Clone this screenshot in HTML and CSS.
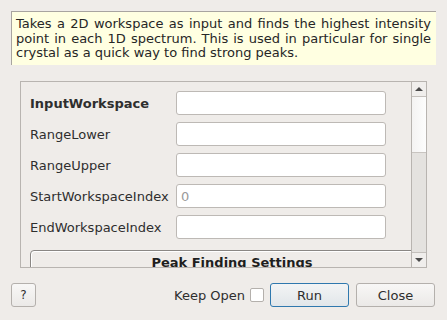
FILE: index.html
```html
<!DOCTYPE html>
<html lang="en">
<head>
    <meta charset="UTF-8">
    <meta name="viewport" content="width=device-width, initial-scale=1.0">
    <title>FindPeaks</title>
    <link rel="stylesheet" href="styles.css">
</head>
<body>
    <div class="description">
        Takes a 2D workspace as input and finds the highest intensity point in each 1D spectrum. This is used in particular for single crystal as a quick way to find strong peaks.
    </div>

    <div class="scroll-area">
        <div class="form-content">
            <div class="form-grid">
                <label class="mandatory" for="inputWorkspace">InputWorkspace</label>
                <input type="text" id="inputWorkspace">

                <label for="rangeLower">RangeLower</label>
                <input type="text" id="rangeLower">

                <label for="rangeUpper">RangeUpper</label>
                <input type="text" id="rangeUpper">

                <label for="startIndex">StartWorkspaceIndex</label>
                <input type="text" id="startIndex" placeholder="0">

                <label for="endIndex">EndWorkspaceIndex</label>
                <input type="text" id="endIndex">
            </div>
            <div class="group-box">
                <div class="group-title">Peak Finding Settings</div>
            </div>
        </div>
        <div class="scrollbar">
            <div class="arrow-btn"><span class="arrow-up"></span></div>
            <div class="handle"></div>
            <div class="track"></div>
            <div class="arrow-btn bottom"><span class="arrow-down"></span></div>
        </div>
    </div>

    <div class="button-bar">
        <button class="help-button">?</button>
        <div class="spacer"></div>
        <label class="keep-open" for="keepOpen">Keep Open</label>
        <span class="checkbox" id="keepOpen"></span>
        <button class="run-button">Run</button>
        <button class="close-button">Close</button>
    </div>
</body>
</html>
```

FILE: styles.css
```css
body {
    font-family: "DejaVu Sans", sans-serif;
    font-size: 13px;
    color: #2e2e2e;
    background-color: #efece9;
    margin: 0;
    width: 447px;
    height: 320px;
    overflow: hidden;
}

.description {
    margin: 11px 11px 0;
    height: 48px;
    padding: 5px 5px 0 4px;
    border-top: 1px solid #a8a4a0;
    border-left: 1px solid #a8a4a0;
    background-color: #ffffe1;
    text-align: justify;
    line-height: 14.5px;
    color: #262626;
}

.scroll-area {
    margin: 16px 20px 0;
    width: 405px;
    height: 185px;
    border: 1px solid #b8b4b0;
    display: flex;
    overflow: hidden;
}

.form-content {
    flex: 1;
    padding: 9px 0 0 9px;
    overflow: hidden;
}

.form-grid {
    display: grid;
    grid-template-columns: 146px 210px;
    row-gap: 7px;
    align-items: center;
}

.form-grid label {
    white-space: nowrap;
}

.form-grid label.mandatory {
    font-weight: bold;
}

.form-grid input {
    box-sizing: border-box;
    height: 24px;
    width: 210px;
    margin: 0;
    padding: 0 4px;
    border: 1px solid #bdb9b5;
    border-radius: 3px;
    background-color: #fff;
    font-family: "DejaVu Sans", sans-serif;
    font-size: 13px;
}

.form-grid input::placeholder {
    color: #9a9a9a;
}

.group-box {
    margin-top: 11px;
    width: 402px;
    height: 40px;
    border: 1px solid #8a8784;
    border-radius: 4px;
    box-shadow: inset 1px 1px 0 #fff;
}

.group-title {
    text-align: center;
    font-weight: bold;
    padding-top: 4px;
    color: #1e1e1e;
}

.scrollbar {
    width: 14px;
    border-left: 1px solid #b8b4b0;
    display: flex;
    flex-direction: column;
    background-color: #e4e2df;
}

.arrow-btn {
    height: 14px;
    border-bottom: 1px solid #c4c0bc;
    background-color: #f0eeec;
    display: flex;
    align-items: center;
    justify-content: center;
}

.arrow-btn.bottom {
    border-bottom: none;
    border-top: 1px solid #c4c0bc;
}

.arrow-up {
    width: 0;
    height: 0;
    border-left: 4px solid transparent;
    border-right: 4px solid transparent;
    border-bottom: 4px solid #4a4a4a;
}

.arrow-down {
    width: 0;
    height: 0;
    border-left: 4px solid transparent;
    border-right: 4px solid transparent;
    border-top: 4px solid #4a4a4a;
}

.handle {
    height: 55px;
    border-bottom: 1px solid #c8c4c0;
    background: linear-gradient(to right, #f4f3f2, #fdfdfd);
}

.track {
    flex: 1;
}

.button-bar {
    display: flex;
    align-items: center;
    margin: 15px 12px 0 11px;
    height: 24px;
}

.spacer {
    flex: 1;
}

button {
    box-sizing: border-box;
    height: 24px;
    margin: 0;
    padding: 0;
    border: 1px solid #b4b0ac;
    border-radius: 3px;
    background: linear-gradient(to bottom, #f8f7f6, #ebe9e7);
    font-family: "DejaVu Sans", sans-serif;
    font-size: 13px;
    color: #2e2e2e;
    cursor: pointer;
}

.help-button {
    width: 25px;
    font-size: 12px;
}

.keep-open {
    margin-right: 5px;
}

.checkbox {
    box-sizing: border-box;
    width: 14px;
    height: 14px;
    border: 1px solid #b4b0ac;
    border-radius: 2px;
    background-color: #fff;
    margin-right: 6px;
}

.run-button {
    width: 79px;
    border-color: #2f78ae;
    background: linear-gradient(to bottom, #f3f4f5, #e1e6ea);
}

.close-button {
    width: 79px;
    margin-left: 7px;
}
```
